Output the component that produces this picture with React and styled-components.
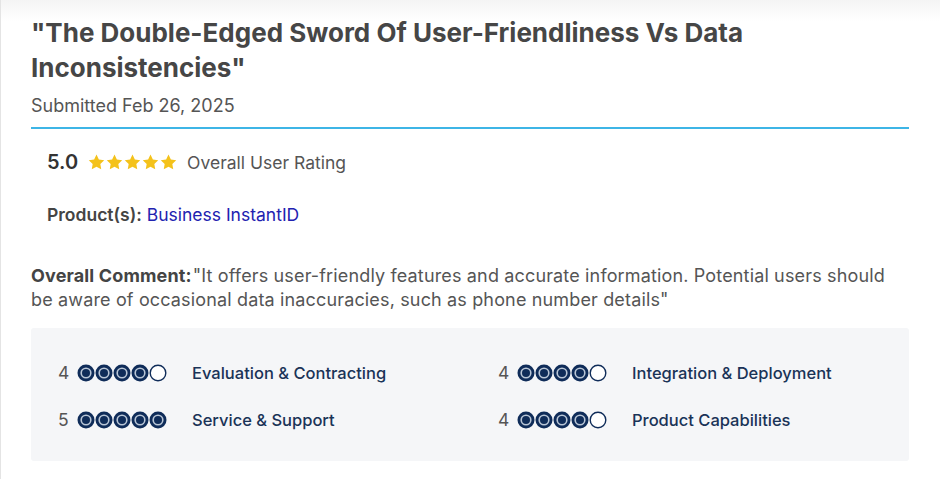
import React from 'react'
import styled, { createGlobalStyle } from 'styled-components'

const GlobalStyle = createGlobalStyle`
  body {
    margin: 0;
    background: #fff;
    font-family: Inter, "Open Sans", Arial, sans-serif;
  }
`

const ratings = [
  { score: 4, label: 'Evaluation & Contracting' },
  { score: 4, label: 'Integration & Deployment' },
  { score: 5, label: 'Service & Support' },
  { score: 4, label: 'Product Capabilities' },
]

const Dot = ({ filled }) => (
  <svg width="18" height="18" viewBox="0 0 18 18">
    {filled ? (
      <>
        <circle cx="9" cy="9" r="8.5" fill="#0f2c59" />
        <circle cx="9" cy="9" r="5.6" fill="#b9c6d6" />
        <circle cx="9" cy="9" r="4" fill="#0f2c59" />
      </>
    ) : (
      <circle cx="9" cy="9" r="7.8" fill="#fff" stroke="#0f2c59" strokeWidth="1.4" />
    )}
  </svg>
)

const Star = () => (
  <svg width="17" height="16" viewBox="0 0 24 23">
    <path d="M12 0.8l3.4 7 7.7 1.1-5.6 5.4 1.3 7.6L12 18.3l-6.8 3.6 1.3-7.6L0.9 8.9l7.7-1.1z" fill="#f4c21b" />
  </svg>
)

const App = () => {
  return (
    <>
      <GlobalStyle />
      <Page>
        <Title>"The Double-Edged Sword Of User-Friendliness Vs Data Inconsistencies"</Title>
        <Submitted>Submitted Feb 26, 2025</Submitted>
        <Divider />
        <Info>
          <RatingRow>
            <Score>5.0</Score>
            <Stars>
              {[0, 1, 2, 3, 4].map(i => <Star key={i} />)}
            </Stars>
            <Muted>Overall User Rating</Muted>
          </RatingRow>
          <ProductRow>
            <strong>Product(s):</strong> <ProductLink>Business InstantID</ProductLink>
          </ProductRow>
        </Info>
        <Comment>
          <strong>Overall Comment:</strong>"It offers user-friendly features and accurate information. Potential users should be aware of occasional data inaccuracies, such as phone number details"
        </Comment>
        <ScoreBox>
          {ratings.map(r => (
            <ScoreItem key={r.label}>
              <Num>{r.score}</Num>
              <Dots>
                {[1, 2, 3, 4, 5].map(n => <Dot key={n} filled={n <= r.score} />)}
              </Dots>
              <Label>{r.label}</Label>
            </ScoreItem>
          ))}
        </ScoreBox>
      </Page>
    </>
  )
}

const Page = styled.div`
  min-height: 479px;
  box-sizing: border-box;
  padding: 15px 31px 0 30px;
  border-left: 1px solid #e4e4e4;
  background: linear-gradient(#f4f4f4 0, #fff 22px);
`

const Title = styled.h1`
  margin: 0;
  font-size: 26px;
  line-height: 35px;
  font-weight: 700;
  color: #464646;
`

const Submitted = styled.div`
  margin-top: 9px;
  font-size: 18px;
  line-height: 24px;
  color: #555;
`

const Divider = styled.hr`
  margin: 9px 0 0;
  border: 0;
  height: 2px;
  background: #3db5e6;
`

const Info = styled.div`
  padding: 21px 16px 0;
  display: flex;
  flex-direction: column;
  gap: 30px;
`

const RatingRow = styled.div`
  display: flex;
  align-items: center;
  gap: 10px;
`

const Score = styled.span`
  font-size: 20px;
  font-weight: 600;
  color: #333;
`

const Stars = styled.span`
  display: flex;
  gap: 1px;
`

const Muted = styled.span`
  font-size: 17.5px;
  color: #555;
`

const ProductRow = styled.div`
  font-size: 17.5px;
  color: #444;
  strong {
    font-weight: 600;
  }
`

const ProductLink = styled.a`
  color: #2222b0;
  text-decoration: none;
`

const Comment = styled.p`
  margin: 39px 0 0;
  font-size: 18px;
  line-height: 24px;
  letter-spacing: 0.15px;
  color: #555;
  strong {
    color: #444;
    font-weight: 700;
    margin-right: 1px;
  }
`

const ScoreBox = styled.div`
  margin-top: 16px;
  background: #f5f6f8;
  border-radius: 3px;
  padding: 34px 27px 31px;
  display: grid;
  grid-template-columns: 440px 1fr;
  row-gap: 26px;
`

const ScoreItem = styled.div`
  display: flex;
  align-items: center;
`

const Num = styled.span`
  font-size: 17.5px;
  color: #555;
  width: 19px;
`

const Dots = styled.span`
  display: flex;
  height: 18px;
`

const Label = styled.span`
  margin-left: 25px;
  font-size: 16.5px;
  font-weight: 500;
  color: #1a3357;
`

export default App
